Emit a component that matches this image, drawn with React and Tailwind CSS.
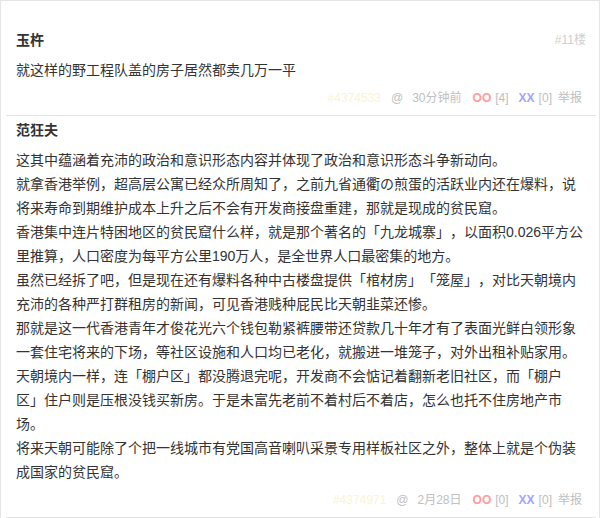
import React from "react";

const paras = [
  "这其中蕴涵着充沛的政治和意识形态内容并体现了政治和意识形态斗争新动向。",
  "就拿香港举例，超高层公寓已经众所周知了，之前九省通衢の煎蛋的活跃业内还在爆料，说将来寿命到期维护成本上升之后不会有开发商接盘重建，那就是现成的贫民窟。",
  "香港集中连片特困地区的贫民窟什么样，就是那个著名的「九龙城寨」，以面积0.026平方公里推算，人口密度为每平方公里190万人，是全世界人口最密集的地方。",
  "虽然已经拆了吧，但是现在还有爆料各种中古楼盘提供「棺材房」「笼屋」，对比天朝境内充沛的各种严打群租房的新闻，可见香港贱种屁民比天朝韭菜还惨。",
  "那就是这一代香港青年才俊花光六个钱包勒紧裤腰带还贷款几十年才有了表面光鲜白领形象一套住宅将来的下场，等社区设施和人口均已老化，就搬进一堆笼子，对外出租补贴家用。",
  "天朝境内一样，连「棚户区」都没腾退完呢，开发商不会惦记着翻新老旧社区，而「棚户区」住户则是压根没钱买新房。于是未富先老前不着村后不着店，怎么也托不住房地产市场。",
  "将来天朝可能除了个把一线城市有党国高音喇叭采景专用样板社区之外，整体上就是个伪装成国家的贫民窟。",
];

function Footer({ id, time, oo, xx }) {
  return (
    <div
      className="mt-[4px] flex justify-end items-center h-[24px] pr-[4px] text-[12px] text-[#c0c0c0] whitespace-nowrap"
      style={{ fontFamily: '"Liberation Sans", "Noto Sans CJK SC", sans-serif' }}
    >
      <span className="text-[#fbf4d2]">{id}</span>
      <span className="ml-[10px]">@</span>
      <span className="ml-[9px]">{time}</span>
      <span className="ml-[11px] font-bold text-[#ff9c9c]">OO</span>
      <span className="ml-[4px]">[{oo}]</span>
      <span className="ml-[10px] font-bold text-[#a3a3ff]">XX</span>
      <span className="ml-[4px]">[{xx}]</span>
      <span className="ml-[6px]">举报</span>
    </div>
  );
}

export default function App() {
  return (
    <div
      className="w-[600px] border-l border-t border-r border-[#e5e5e5] bg-white pt-[25px] pl-[5px] pr-[3px] text-[#333] [text-spacing-trim:space-all]"
      style={{ fontFamily: '"Liberation Sans", "Noto Sans CJK SC", sans-serif' }}
    >
      <div className="border-b border-[#e3e3e3] px-[10px] pt-[2px] pb-[5px]">
        <div className="flex justify-between items-center h-[24px]">
          <span className="text-[14px] font-bold">玉杵</span>
          <span className="text-[12px] text-[#cfcfcf]">#11楼</span>
        </div>
        <div className="mt-[6px] text-[14px] leading-[24px]">就这样的野工程队盖的房子居然都卖几万一平</div>
        <Footer id="#4374533" time="30分钟前" oo="4" xx="0" />
      </div>
      <div className="border-b border-[#e3e3e3] px-[10px] pt-[2px] pb-[5px]">
        <div className="flex items-center h-[24px]">
          <span className="text-[14px] font-bold">范狂夫</span>
        </div>
        <div className="mt-[6px] text-[14px] leading-[24px]">
          {paras.map((p, i) => (
            <p key={i}>{p}</p>
          ))}
        </div>
        <Footer id="#4374971" time="2月28日" oo="0" xx="0" />
      </div>
    </div>
  );
}
